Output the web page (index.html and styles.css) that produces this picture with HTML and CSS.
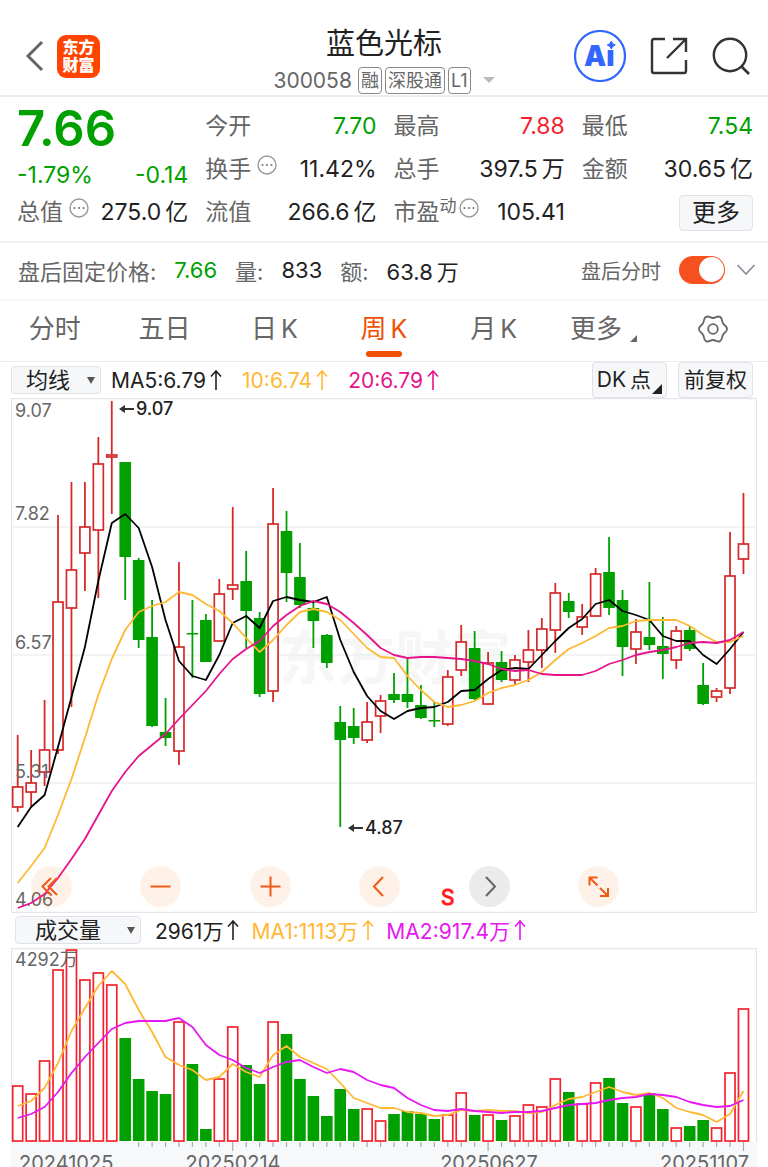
FILE: index.html
```html
<!DOCTYPE html>
<html lang="zh-CN">
<head>
<meta charset="utf-8">
<meta name="viewport" content="width=device-width, initial-scale=1">
<title>蓝色光标 300058</title>
<link rel="stylesheet" href="styles.css">
</head>
<body>
<header class="topbar">
  <div class="topbar-left">
    <button class="icon-btn" aria-label="返回"><svg width="20" height="34" viewBox="0 0 20 34"><path d="M17 3 3 17l14 14" fill="none" stroke="#666" stroke-width="3"/></svg></button>
    <div class="brand"><span>东方</span><span>财富</span></div>
  </div>
  <div class="topbar-title">
    <h1>蓝色光标</h1>
    <div class="code-row"><span class="code">300058</span><span class="tag">融</span><span class="tag">深股通</span><span class="tag">L1</span><i class="caret-light"></i></div>
  </div>
  <div class="topbar-right">
    <button class="icon-btn" aria-label="AI 助手"><svg width="52" height="52" viewBox="0 0 52 52"><circle cx="26" cy="26" r="25" fill="#fff" stroke="#3366ff" stroke-width="2.2"/><text class="ai-text" x="10" y="36">Ai</text><circle cx="37" cy="14" r="5" fill="#fff"/><path d="M37.300 11q.8 3.200 4 4-3.200.8-4 4-.8-3.200-4-4 3.200-.8 4-4z" fill="#3366ff" stroke="#3366ff"/></svg></button>
    <button class="icon-btn" aria-label="分享"><svg width="38" height="38" viewBox="0 0 38 38"><path d="M15 2H4Q2 2 2 4v30q0 2 2 2h30q2 0 2-2V23M23 2h13v13M36 2 17 21" fill="none" stroke="#333" stroke-width="2.4"/></svg></button>
    <button class="icon-btn" aria-label="搜索"><svg width="38" height="38" viewBox="0 0 38 38"><circle cx="18" cy="18" r="16.200" fill="none" stroke="#333" stroke-width="2.400"/><path d="m29.500 29.500 7.500 7.500" stroke="#333" stroke-width="2.600"/></svg></button>
  </div>
</header>

<section class="quote">
  <div class="price down">7.66</div>
  <div class="cell"><span class="label">今开</span><span class="down">7.70</span></div>
  <div class="cell"><span class="label">最高</span><span class="up">7.88</span></div>
  <div class="cell"><span class="label">最低</span><span class="down">7.54</span></div>
  <div class="cell change down"><span>-1.79%</span><span>-0.14</span></div>
  <div class="cell"><span class="label">换手<svg class="info" viewBox="0 0 20 20"><use href="#info"/></svg></span><span>11.42%</span></div>
  <div class="cell"><span class="label">总手</span><span>397.5<b>万</b></span></div>
  <div class="cell"><span class="label">金额</span><span>30.65<b>亿</b></span></div>
  <div class="cell"><span class="label">总值<svg class="info" viewBox="0 0 20 20"><use href="#info"/></svg></span><span>275.0<b>亿</b></span></div>
  <div class="cell"><span class="label">流值</span><span>266.6<b>亿</b></span></div>
  <div class="cell"><span class="label">市盈<small>动</small><svg class="info tight" viewBox="0 0 20 20"><use href="#info"/></svg></span><span>105.41</span></div>
  <div class="cell end"><button class="chip more">更多</button></div>
</section>

<section class="after">
  <span class="label">盘后固定价格:</span><span class="down">7.66</span>
  <span class="label">量:</span><span>833</span>
  <span class="label">额:</span><span>63.8<b>万</b></span>
  <label class="after-label" for="after-switch">盘后分时</label>
  <input class="switch" id="after-switch" type="checkbox" role="switch" checked>
  <button class="icon-btn" aria-label="展开"><svg width="20" height="12" viewBox="0 0 20 12"><path d="m1.500 1 8.500 9 8.500-9" fill="none" stroke="#8a8f99" stroke-width="1.800"/></svg></button>
</section>

<nav class="tabs">
  <button>分时</button>
  <button>五日</button>
  <button>日<span>K</span></button>
  <button class="active">周<span>K</span></button>
  <button>月<span>K</span></button>
  <button>更多<i class="corner"></i></button>
  <button aria-label="设置"><svg width="32" height="32" viewBox="0 0 32 32" fill="none" stroke="#666" stroke-width="1.800"><path d="M30 16C30 13 27.500 12.800 26 10.200S25.600 5.400 23 3.900 19 5 16 5 11.600 2.400 9 3.900 7.500 7.600 6 10.200 2 13 2 16 4.500 19.200 6 21.800 6.400 26.600 9 28.100 13 27 16 27 20.400 29.600 23 28.100 24.500 24.400 26 21.800 30 19 30 16z"/><circle cx="16" cy="16" r="4.800"/></svg></button>
</nav>

<main class="charts">
  <div class="legend main-legend">
    <span class="picker picker-ma"><select aria-label="指标"><option>均线</option></select></span>
    <span class="ma-black">MA5:6.79<svg class="arrow" viewBox="0 0 12 20"><use href="#arrow"/></svg></span>
    <span class="ma-gold">10:6.74<svg class="arrow" viewBox="0 0 12 20"><use href="#arrow"/></svg></span>
    <span class="ma-pink">20:6.79<svg class="arrow" viewBox="0 0 12 20"><use href="#arrow"/></svg></span>
    <span class="legend-actions"><button class="chip">DK<b>点</b><i class="corner dark"></i></button><button class="chip">前复权</button></span>
  </div>
  <div class="kchart">
    <svg id="kline" viewBox="11 398 746 515" role="img" aria-label="周K线"></svg>
    <div class="tools">
      <button class="tool" aria-label="最早"><svg viewBox="0 0 41 41"><path d="m20 12-8.500 8.500 8.500 8.500M26 12l-8.500 8.500L26 29"/></svg></button>
      <button class="tool" aria-label="缩小"><svg viewBox="0 0 41 41"><path d="M10.500 20.500h20"/></svg></button>
      <button class="tool" aria-label="放大"><svg viewBox="0 0 41 41"><path d="M10.500 20.500h20M20.500 10.500v20"/></svg></button>
      <button class="tool" aria-label="前一根"><svg viewBox="0 0 41 41"><path d="m24 11-9 9.500 9 9.500"/></svg></button>
      <button class="tool gray" aria-label="后一根"><svg viewBox="0 0 41 41"><path d="m17 11 9 9.500-9 9.500"/></svg></button>
      <button class="tool" aria-label="全屏"><svg viewBox="0 0 41 41"><path d="M19.500 11.500h-8v8M11.500 11.500l8 8M22 30h8v-8M30 30l-8-8"/></svg></button>
    </div>
  </div>
  <div class="legend vol-legend">
    <span class="picker picker-vol"><select aria-label="副图指标"><option>成交量</option></select></span>
    <span>2961万<svg class="arrow" viewBox="0 0 12 20"><use href="#arrow"/></svg></span>
    <span class="ma-gold">MA1:1113万<svg class="arrow" viewBox="0 0 12 20"><use href="#arrow"/></svg></span>
    <span class="ma-violet">MA2:917.4万<svg class="arrow" viewBox="0 0 12 20"><use href="#arrow"/></svg></span>
  </div>
  <svg id="volume" viewBox="11 948 746 219" role="img" aria-label="成交量"></svg>
</main>

<svg class="defs" aria-hidden="true">
  <symbol id="info" viewBox="0 0 20 20"><circle cx="10" cy="10" r="9" fill="none" stroke="#999" stroke-width="1.400"/><circle cx="5.500" cy="10" r="1.100" fill="#777"/><circle cx="10" cy="10" r="1.100" fill="#777"/><circle cx="14.500" cy="10" r="1.100" fill="#777"/></symbol>
  <symbol id="arrow" viewBox="0 0 12 20"><path d="M6 20V1M1 6.500 6 1l5 5.500" fill="none" stroke="currentColor" stroke-width="1.600"/></symbol>
</svg>
<script src="charts.js"></script>
</body>
</html>
```

FILE: styles.css
```css
* { box-sizing: border-box; }
body {
  margin: 0;
  background: #fff;
  color: #222;
  font-family: Inter, "Noto Sans CJK SC", sans-serif;
  font-size: 23px;
  font-weight: 400;
  overflow-x: hidden;
}
button, select { font: inherit; color: inherit; margin: 0; }
button { border: 0; background: none; padding: 0; cursor: pointer; }
b { font-weight: 400; margin-left: 4px; }
svg { display: block; }
.defs { position: absolute; width: 0; height: 0; }
.down { color: #00a000; }
.up { color: #f5222d; }
.label { color: #666; }
.icon-btn { display: flex; align-items: center; justify-content: center; }

.topbar {
  display: grid;
  grid-template-columns: 1fr auto 1fr;
  align-items: center;
  height: 97px;
  padding: 16px 18px 0;
  border-bottom: 2px solid #eee;
}
.topbar-left { display: flex; align-items: center; gap: 12px; padding-left: 7px; }
.topbar-right { display: flex; align-items: center; justify-content: flex-end; gap: 24px; }
.brand {
  display: flex;
  flex-direction: column;
  align-items: center;
  justify-content: center;
  width: 43px;
  height: 43px;
  border-radius: 9px;
  background: #ff4400;
  color: #fff;
  font-size: 16px;
  font-weight: 900;
  line-height: 18px;
}
.topbar-title { padding-top: 8px; text-align: center; }
.topbar-title h1 { margin: 0; font-size: 29px; font-weight: 400; line-height: 40px; }
.code-row { display: flex; align-items: center; gap: 3px; height: 32px; color: #666; }
.code { font-size: 21px; margin-right: 3px; }
.tag {
  height: 27px;
  padding: 0 2px;
  border: 1px solid #888;
  border-radius: 4px;
  font-size: 18px;
  line-height: 25px;
}
.caret-light {
  margin-left: 9px;
  border: 6px solid transparent;
  border-top-color: #bbb;
  border-bottom: 0;
}
.ai-text { font-size: 28px; font-weight: 900; fill: #3366ff; }

.quote {
  display: grid;
  grid-template-columns: repeat(4, 1fr);
  grid-auto-rows: 43px;
  column-gap: 17px;
  padding: 8px 15px 7px 17px;
  border-bottom: 2px solid #f2f2f2;
}
.price { font-size: 49px; font-weight: 600; line-height: 48px; }
.cell {
  display: flex;
  align-items: center;
  justify-content: space-between;
  line-height: 43px;
  white-space: nowrap;
}
.cell .label { display: flex; }
.change { padding-top: 12px; line-height: 31px; }
.cell small { font-size: 17px; line-height: 30px; }
.cell.end { justify-content: flex-end; }
.info { width: 20px; height: 20px; margin: 7px 0 0 6px; }
.info.tight { margin-left: 2px; }
.chip {
  position: relative;
  height: 36px;
  padding: 0 5px;
  border: 1px solid #e0e2e8;
  border-radius: 4px;
  background: #f6f7f9;
  line-height: 34px;
  white-space: nowrap;
}
.chip.more { padding: 0 12px; font-size: 24px; line-height: 32px; }

.after {
  display: flex;
  align-items: center;
  height: 58px;
  padding: 0 12px 2px 18px;
  border-bottom: 2px solid #f7f7f7;
  gap: 18px;
  font-size: 22px;
  white-space: nowrap;
}
.after-label { margin-left: auto; color: #666; font-size: 20px; }
.switch {
  appearance: none;
  width: 46px;
  height: 28px;
  margin: 0;
  border-radius: 14px;
  background: #f5501e;
}
.switch::before {
  content: "";
  display: block;
  width: 25px;
  height: 25px;
  margin: 1px 1px 0 20px;
  border-radius: 50%;
  background: #fff;
}
.after .icon-btn { margin-left: -7px; }

.tabs {
  display: grid;
  grid-template-columns: repeat(7, 1fr);
  height: 61px;
  border-bottom: 1px solid #eee;
  color: #666;
  font-size: 26px;
}
.tabs button { position: relative; display: flex; align-items: center; justify-content: center; padding-bottom: 4px; line-height: 36px; }
.tabs span { margin-left: 4px; font-size: 25px; }
.tabs .active { color: #f05000; }
.tabs .active::after {
  content: "";
  position: absolute;
  bottom: 4px;
  width: 36px;
  height: 6px;
  border-radius: 3px;
  background: #f05000;
}
.corner {
  margin: 18px 0 0 8px;
  border-left: 7px solid transparent;
  border-bottom: 7px solid #666;
}
.corner.dark {
  position: absolute;
  right: 4px;
  bottom: 3px;
  margin: 0;
  border-left-width: 10px;
  border-bottom: 10px solid #222;
}

.charts { padding: 0 11px; }
.legend { display: flex; align-items: center; white-space: nowrap; font-size: 21px; }
.legend > span { display: flex; align-items: center; }
.main-legend { height: 36px; gap: 20px; }
.vol-legend { height: 35px; gap: 12px; padding: 0 0 1px 4px; }
.arrow { width: 12px; height: 20px; margin-left: 4px; }
.picker { position: relative; }
.picker-ma { margin-right: -10px; }
.picker-vol { margin-right: 2px; }
.picker::after {
  content: "";
  position: absolute;
  right: 6px;
  border: 4px solid transparent;
  border-top: 7px solid #555;
  border-bottom: 0;
  pointer-events: none;
}
.picker select {
  appearance: none;
  height: 28px;
  padding: 0 29px 0 14px;
  border: 1px solid #e0e2e8;
  border-radius: 4px;
  background: #f6f7f9;
  font-size: 22px;
  line-height: 24px;
}
.picker-vol select { padding: 0 38px 0 19px; }
.legend > .legend-actions { margin-left: auto; margin-right: 4px; gap: 11px; }
.legend-actions .chip { font-size: 21px; }
.legend-actions .chip:first-child { padding: 0 15px 0 4px; }
.ma-gold { color: #ffb833; }
.ma-pink { color: #e6148c; }
.ma-violet { color: #e617f0; }

.kchart { position: relative; }
.kchart > svg, #volume { width: 100%; height: auto; }
.tools {
  position: absolute;
  left: 20px;
  right: 138px;
  bottom: 6px;
  display: flex;
  justify-content: space-between;
}
.tool { width: 41px; height: 41px; border-radius: 50%; background: rgba(245, 120, 30, .1); }
.tool.gray { background: rgba(0, 0, 0, .08); }
.tool path { fill: none; stroke: #f05a14; stroke-width: 2; }
.tool.gray path { stroke: #666; }

.axis-text { font-size: 18px; fill: #666; }
.date-text { font-size: 20px; fill: #666; }
.mark-text { font-size: 18px; font-weight: 500; fill: #222; }
.signal-text { font-size: 21px; fill: #ff1e1e; stroke: #ff1e1e; }
.watermark { font-size: 58px; font-weight: 700; fill: #f6f6f6; }
```

FILE: charts.js
```js
const NS = "http://www.w3.org/2000/svg";
const STEP = 13.44;
const X0 = 17.7;
const RED = "#d42a2a";
const GREEN = "#00a000";
const xAt = i => X0 + i * STEP;

// direction, high, body top, body bottom, low
const candles = [
  ["R",735,787,807,812],["R",750,783,792,806],["R",700,750,772,786],["R",515,602,750,754],["R",482,570,608,707],
  ["R",482,527,553,591],["R",437,464,530,598],["R",401,455,457,514],["G",462,462,557,600],["G",558,560,640,648],
  ["G",600,637,726,727],["G",698,732,738,746],["R",562,647,751,765],["G",600,633,634,678],["G",614,620,662,662],
  ["R",579,594,641,641],["R",507,585,589,600],["G",551,581,611,648],["G",612,618,694,697],["R",488,524,691,702],
  ["G",511,531,573,602],["G",543,577,605,608],["G",602,608,621,648],["G",634,635,663,668],["G",706,722,740,827],
  ["G",708,726,738,744],["R",702,722,740,743],["R",695,701,716,733],["G",673,694,700,703],["G",658,694,702,708],
  ["G",685,705,718,719],["G",702,720,721,727],["R",670,677,724,726],["R",625,642,670,676],["G",631,648,699,700],
  ["R",652,663,704,705],["G",651,662,680,682],["R",655,660,680,684],["R",630,650,662,682],["R",618,629,650,668],
  ["R",583,593,630,653],["G",593,601,612,618],["R",604,617,627,635],["R",568,574,616,616],["G",537,572,608,615],
  ["G",590,600,647,676],["R",619,632,649,664],["G",582,637,645,650],["G",617,646,654,679],["R",626,631,660,669],
  ["G",626,630,649,651],["G",663,685,704,705],["R",688,691,697,702],["R",532,576,688,694],["R",493,544,559,574]
];
const ma5 = [827,807,795,747,697,647,581,523,514,528,567,620,661,676,680,655,623,616,628,601,597,600,602,597,640,672,696,711,719,711,708,707,702,691,690,679,670,668,669,655,641,628,619,604,600,611,615,620,636,641,641,655,664,649,632];
const ma10 = [883,866,848,815,779,738,695,659,630,612,606,602,592,595,604,611,623,638,652,640,625,612,609,612,620,634,648,657,658,676,690,702,707,705,701,693,688,685,680,672,660,649,643,636,628,626,621,620,620,620,626,635,642,642,636];
const ma20 = [908,903,894,878,859,839,815,791,772,756,745,734,719,705,691,674,659,649,641,626,615,606,601,604,612,623,635,648,655,658,657,657,658,659,661,664,669,671,670,674,675,675,675,671,664,660,655,652,650,647,643,642,643,640,632];

const volTop = [1086,1094,1061,970,950,980,973,985,1038,1079,1091,1094,1022,1064,1129,1079,1027,1065,1084,1022,1034,1079,1096,1116,1089,1109,1109,1121,1114,1111,1114,1119,1115,1093,1115,1115,1120,1116,1105,1107,1079,1092,1104,1083,1078,1103,1107,1093,1109,1128,1126,1120,1128,1073,1009];
const volMa1 = [1106,1101,1088,1063,1031,1008,986,971,984,1010,1032,1057,1065,1070,1080,1077,1064,1072,1077,1055,1046,1057,1063,1069,1083,1098,1103,1108,1108,1112,1113,1116,1115,1110,1111,1110,1111,1111,1113,1112,1105,1099,1097,1092,1087,1092,1095,1093,1098,1108,1112,1115,1122,1114,1091];
const volMa2 = [1118,1114,1107,1092,1073,1057,1043,1029,1023,1021,1021,1021,1018,1027,1045,1055,1060,1068,1073,1067,1062,1060,1067,1073,1069,1072,1080,1085,1088,1098,1105,1110,1111,1109,1111,1112,1113,1112,1112,1111,1108,1105,1104,1103,1100,1098,1097,1094,1095,1097,1102,1105,1107,1106,1100];

function add(svg, tag, attrs, text) {
  const el = document.createElementNS(NS, tag);
  for (const key in attrs) el.setAttribute(key, attrs[key]);
  if (text) el.textContent = text;
  svg.appendChild(el);
}
function line(svg, x1, y1, x2, y2, stroke, width) {
  add(svg, "line", { x1, y1, x2, y2, stroke, "stroke-width": width });
}
function curve(svg, values, stroke) {
  const points = values.map((y, i) => xAt(i).toFixed(1) + "," + y).join(" ");
  add(svg, "polyline", { points, stroke, fill: "none", "stroke-width": 1.8, "stroke-linejoin": "round" });
}
function bar(svg, dir, x, top, bottom, red) {
  if (dir === "R") {
    add(svg, "rect", { x: x - 5, y: top, width: 10, height: bottom - top, fill: "#fff", stroke: red, "stroke-width": 1.7 });
  } else {
    add(svg, "rect", { x: x - 5.8, y: top, width: 11.6, height: Math.max(bottom - top, 1.5), fill: GREEN });
  }
}
function leftArrow(svg, x, y) {
  line(svg, x + 4, y, x + 15, y, "#333", 2);
  add(svg, "path", { d: `M${x} ${y}l6-4v8z`, fill: "#333" });
}

const k = document.getElementById("kline");
add(k, "text", { x: 279, y: 679, class: "watermark" }, "东方财富");
for (const y of [527, 655, 783]) line(k, 11, y, 757, y, "#eeeff2", 1.5);
add(k, "rect", { x: 11.5, y: 398.5, width: 745, height: 514, fill: "none", stroke: "#e4e5ea", "stroke-width": 1.4 });
candles.forEach(([dir, high, top, bottom, low], i) => {
  const x = xAt(i);
  const color = dir === "R" ? RED : GREEN;
  line(k, x, high, x, low, color, 1.8);
  bar(k, dir, x, top, bottom, RED);
});
[["9.07", 417], ["7.82", 520], ["6.57", 649], ["5.31", 778], ["4.06", 906]].forEach(([t, y]) =>
  add(k, "text", { x: 15, y, class: "axis-text" }, t));
curve(k, ma5, "#000");
curve(k, ma10, "#ffb833");
curve(k, ma20, "#e6148c");
leftArrow(k, 119, 409);
add(k, "text", { x: 136, y: 415, class: "mark-text" }, "9.07");
leftArrow(k, 348, 828);
add(k, "text", { x: 365, y: 834, class: "mark-text" }, "4.87");
add(k, "text", { x: 441, y: 905, class: "signal-text" }, "S");

const v = document.getElementById("volume");
add(v, "rect", { x: 11, y: 1142, width: 746, height: 30, fill: "#f7f8fa" });
add(v, "path", { d: "M11.500 1142V948.500H756.500V1142", fill: "none", stroke: "#e4e5ea", "stroke-width": 1.4 });
volTop.forEach((top, i) => {
  const x = xAt(i);
  bar(v, candles[i][0], x, top, 1141, "#f5222d");
  if (i > 8) line(v, x, 1142, x, [16, 35, 54].includes(i) ? 1151 : 1147, "#aaa", 1.2);
});
add(v, "text", { x: 15, y: 966, class: "axis-text" }, "4292万");
curve(v, volMa1, "#ffb833");
curve(v, volMa2, "#e617f0");
[["20241025", 19, "start"], ["20250214", 233, "middle"], ["20250627", 489, "middle"], ["20251107", 749, "end"]].forEach(([t, x, anchor]) =>
  add(v, "text", { x, y: 1170, class: "date-text", "text-anchor": anchor }, t));
```
